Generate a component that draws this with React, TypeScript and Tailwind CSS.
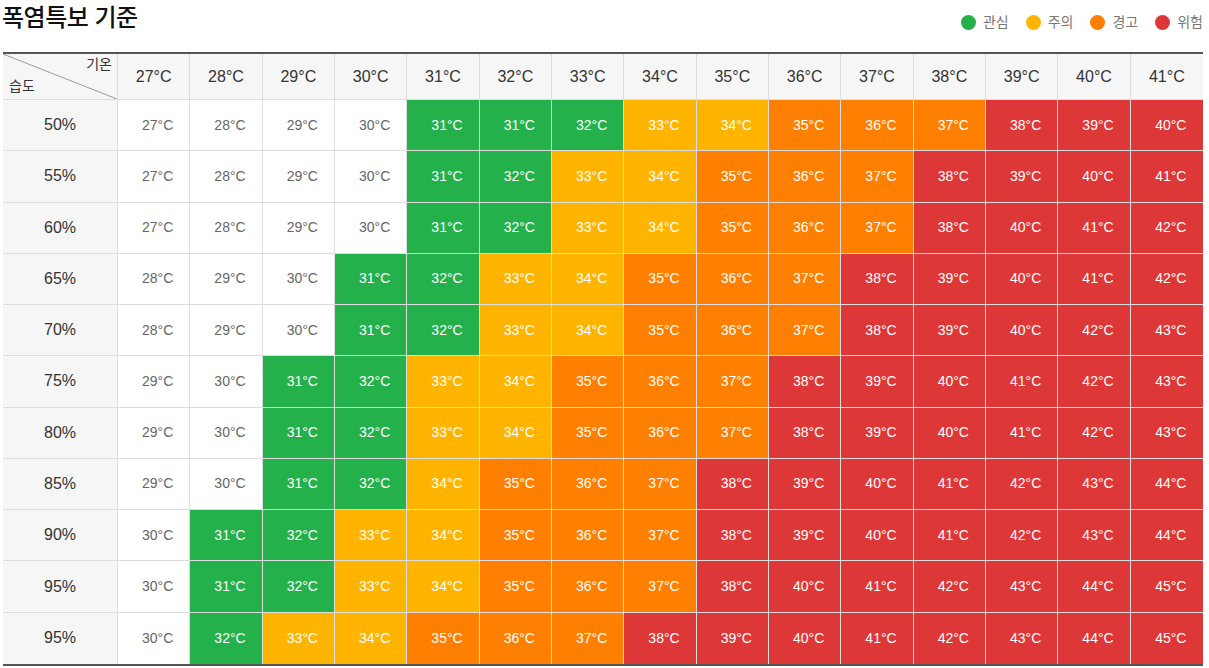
import React from "react";

const temps = [27, 28, 29, 30, 31, 32, 33, 34, 35, 36, 37, 38, 39, 40, 41];

const rows: { h: string; v: number[] }[] = [
  { h: "50%", v: [27, 28, 29, 30, 31, 31, 32, 33, 34, 35, 36, 37, 38, 39, 40] },
  { h: "55%", v: [27, 28, 29, 30, 31, 32, 33, 34, 35, 36, 37, 38, 39, 40, 41] },
  { h: "60%", v: [27, 28, 29, 30, 31, 32, 33, 34, 35, 36, 37, 38, 40, 41, 42] },
  { h: "65%", v: [28, 29, 30, 31, 32, 33, 34, 35, 36, 37, 38, 39, 40, 41, 42] },
  { h: "70%", v: [28, 29, 30, 31, 32, 33, 34, 35, 36, 37, 38, 39, 40, 42, 43] },
  { h: "75%", v: [29, 30, 31, 32, 33, 34, 35, 36, 37, 38, 39, 40, 41, 42, 43] },
  { h: "80%", v: [29, 30, 31, 32, 33, 34, 35, 36, 37, 38, 39, 40, 41, 42, 43] },
  { h: "85%", v: [29, 30, 31, 32, 34, 35, 36, 37, 38, 39, 40, 41, 42, 43, 44] },
  { h: "90%", v: [30, 31, 32, 33, 34, 35, 36, 37, 38, 39, 40, 41, 42, 43, 44] },
  { h: "95%", v: [30, 31, 32, 33, 34, 35, 36, 37, 38, 40, 41, 42, 43, 44, 45] },
  { h: "95%", v: [30, 32, 33, 34, 35, 36, 37, 38, 39, 40, 41, 42, 43, 44, 45] },
];

function cellClass(v: number): string {
  if (v <= 30) return "bg-white text-[#666]";
  if (v <= 32) return "bg-[#24b04a] text-white";
  if (v <= 34) return "bg-[#ffb400] text-white";
  if (v <= 37) return "bg-[#ff7f00] text-white";
  return "bg-[#de3737] text-white";
}

const legend = [
  { c: "bg-[#24b04a]", t: "관심" },
  { c: "bg-[#ffb400]", t: "주의" },
  { c: "bg-[#ff7f00]", t: "경고" },
  { c: "bg-[#de3737]", t: "위험" },
];

export default function App() {
  return (
    <div
      className="w-[1209px] h-[668px] overflow-hidden bg-white"
      style={{ fontFamily: '"Liberation Sans", "Noto Sans CJK KR", sans-serif' }}
    >
      <div className="flex items-start justify-between pl-[2px] pr-[6px] h-[52px]">
        <h1 className="text-[24px] leading-[36px] font-medium text-[#111] tracking-[-0.5px]">
          폭염특보 기준
        </h1>
        <div className="flex items-center gap-[17px] mt-[14px]">
          {legend.map((l) => (
            <div key={l.t} className="flex items-center gap-[7px]">
              <span className={`w-[15px] h-[15px] rounded-full ${l.c}`} />
              <span className="text-[14px] leading-[16px] text-[#777]">{l.t}</span>
            </div>
          ))}
        </div>
      </div>
      <div className="ml-[3px] w-[1200px] border-t-2 border-b-2 border-[#555]">
        <div className="grid grid-cols-[115px_repeat(15,1fr)] grid-rows-[46px_repeat(11,51.27px)]">
          <div className="relative bg-[#f6f6f6] border-r border-b border-[#ddd] text-[14px] text-[#333]">
            <svg className="absolute inset-0 w-full h-full" preserveAspectRatio="none" viewBox="0 0 100 100">
              <line x1="0" y1="0" x2="100" y2="100" stroke="#999" strokeWidth="1" vectorEffect="non-scaling-stroke" />
            </svg>
            <span className="absolute right-[5px] top-[1px] leading-[18px]">기온</span>
            <span className="absolute left-[6px] bottom-[4px] leading-[18px]">습도</span>
          </div>
          {temps.map((t, i) => (
            <div
              key={t}
              className={`flex items-center justify-center bg-[#f6f6f6] border-b border-[#ddd] text-[16px] text-[#333] ${
                i < 14 ? "border-r" : ""
              }`}
            >
              {t}°C
            </div>
          ))}
          {rows.map((r, ri) => (
            <React.Fragment key={ri}>
              <div
                className={`flex items-center justify-center bg-[#f6f6f6] border-r border-[#ddd] text-[16px] text-[#333] ${
                  ri < 10 ? "border-b" : ""
                }`}
              >
                {r.h}
              </div>
              {r.v.map((v, ci) => (
                <div
                  key={ci}
                  className={`flex items-center justify-center pl-[8px] border-[#ddd] text-[14px] ${cellClass(v)} ${
                    ci < 14 ? "border-r" : ""
                  } ${ri < 10 ? "border-b" : ""}`}
                >
                  {v}°C
                </div>
              ))}
            </React.Fragment>
          ))}
        </div>
      </div>
    </div>
  );
}
